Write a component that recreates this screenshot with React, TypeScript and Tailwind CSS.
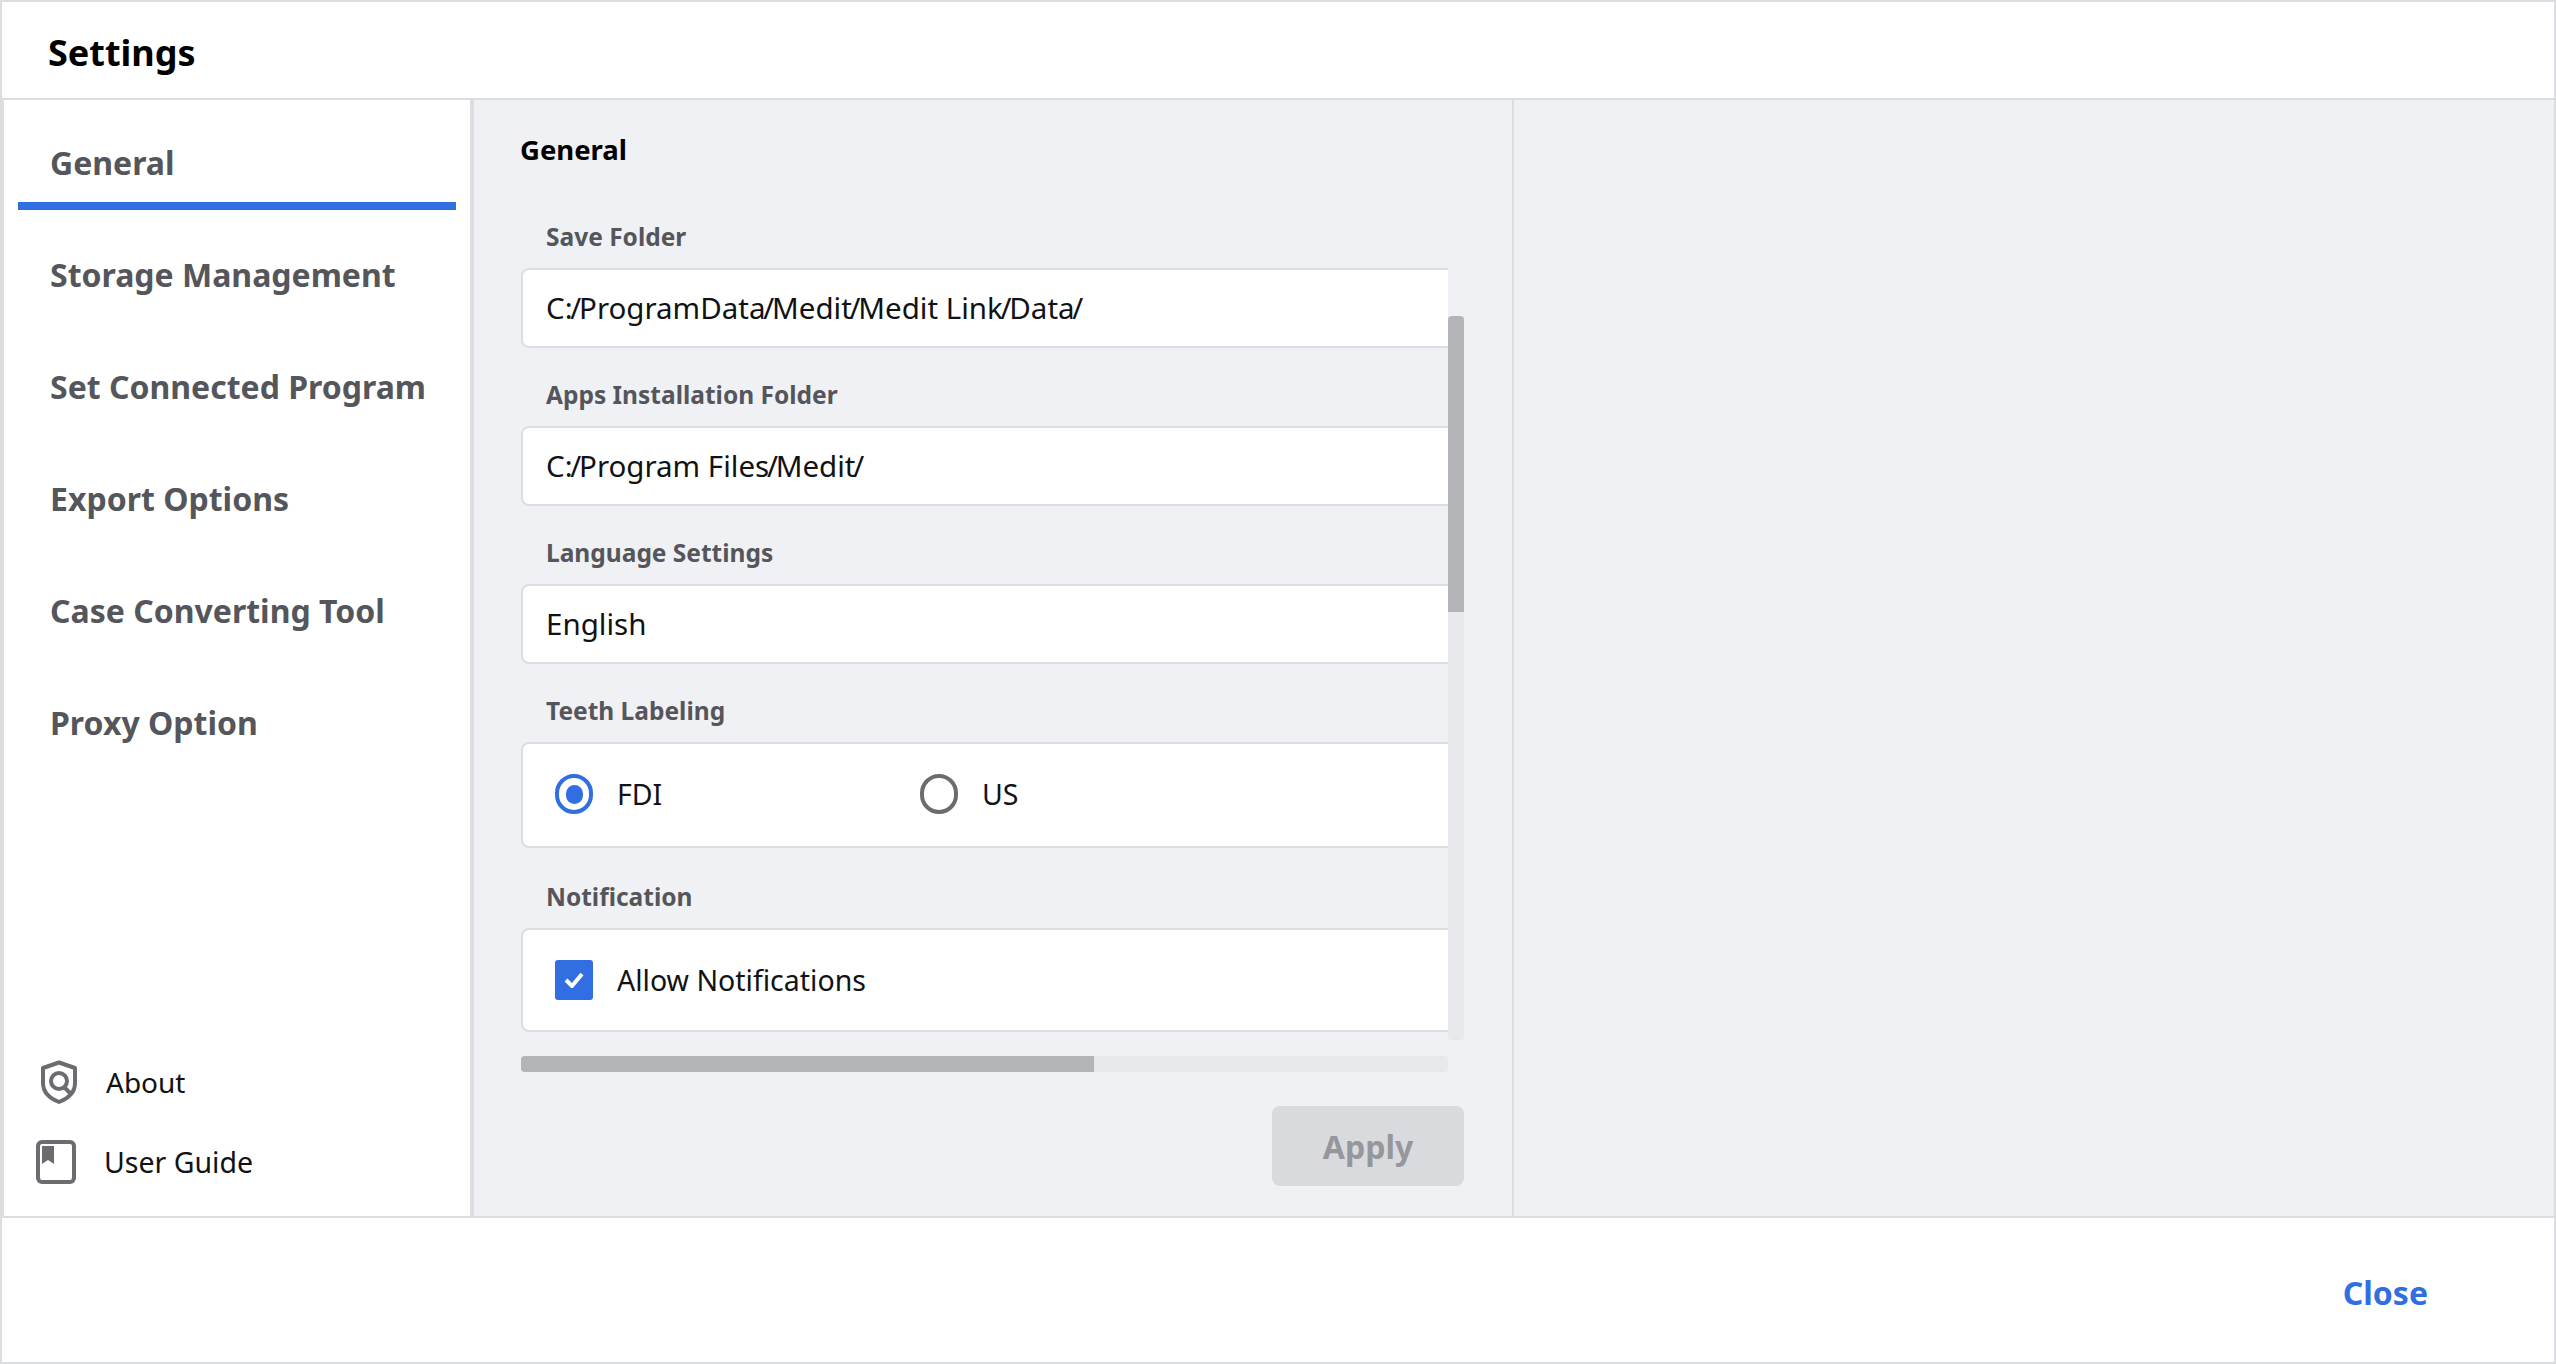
import { ReactNode } from 'react';

const navItems = [
  'General',
  'Storage Management',
  'Set Connected Program',
  'Export Options',
  'Case Converting Tool',
  'Proxy Option',
];

function ShieldIcon() {
  return (
    <svg width="38" height="44" viewBox="0 0 38 44" fill="none" stroke="#6b6c70">
      <path d="M19 2.500 35 8v15c0 9-7 15.500-16 19C10 38.500 3 32 3 23V8z" strokeWidth="4" strokeLinejoin="round" />
      <circle cx="19" cy="21" r="8" strokeWidth="4" />
      <path d="m24 27 7 7" strokeWidth="4" />
    </svg>
  );
}

function BookIcon() {
  return (
    <svg width="40" height="44" viewBox="0 0 40 44" fill="none">
      <rect x="2" y="2" width="36" height="40" rx="4" stroke="#6b6c70" strokeWidth="4" />
      <path d="M6 6h12v18l-6-4-6 4z" fill="#6b6c70" />
    </svg>
  );
}

function Field({ label, children, className }: { label: string; children: ReactNode; className: string }) {
  return (
    <div className={className}>
      <div className="h-[30px] pl-[25px] text-[24.500px] leading-[30px] font-bold text-[#55565b]">{label}</div>
      {children}
    </div>
  );
}

function TextBox({ value }: { value: string }) {
  // slashes sit tighter in the original font
  const parts = value.split('/');
  return (
    <div className="mt-[16px] flex h-[80px] w-[960px] items-center rounded-[8px] border-2 border-[#dcdde0] bg-white pl-[23px] text-[29.500px] text-[#111214]">
      <span className="whitespace-pre">
        {parts.map((part, index) => (
          <span key={index}>
            {part}
            {index < parts.length - 1 && <span className="mx-[-2.250px]">/</span>}
          </span>
        ))}
      </span>
    </div>
  );
}

export default function App() {
  return (
    <div className="flex h-[1364px] w-full flex-col border-2 border-[#dcdde0] bg-white font-['Noto_Sans',sans-serif]">
      <header className="flex h-[96px] shrink-0 items-center pt-[5px] pl-[46px] text-[36px] font-bold text-black">Settings</header>

      <div className="flex min-h-0 flex-1 border-y-2 border-[#dcdde0]">
        {/* Sidebar */}
        <aside className="flex w-[472px] shrink-0 flex-col border-r-4 border-l-2 border-[#dcdde0] bg-white pl-[14px]">
          <nav className="flex flex-col">
            {navItems.map((item, index) => (
              <a
                key={index}
                className={
                  index === 0
                    ? 'mb-[2px] h-[110px] w-[438px] border-b-8 border-[#306ee2] pt-[41px] pl-[32px] text-[32px] leading-[44px] font-bold text-[#55565b]'
                    : 'h-[112px] w-[438px] pt-[41px] pl-[32px] text-[32px] leading-[44px] font-bold text-[#55565b]'
                }
              >
                {item}
              </a>
            ))}
          </nav>
          <div className="mt-auto flex flex-col gap-[36px] pb-[32px] pl-[18px]">
            <div className="flex h-[44px] items-center gap-[28px] pl-[4px] text-[28px] text-[#111214]">
              <ShieldIcon />
              About
            </div>
            <div className="flex h-[44px] items-center gap-[28px] text-[28.500px] text-[#111214]">
              <BookIcon />
              User Guide
            </div>
          </div>
        </aside>

        {/* General panel */}
        <main className="flex w-[1040px] shrink-0 flex-col border-r-2 border-[#dcdde0] bg-[#f0f1f5] pl-[46px]">
          <h2 className="mt-[30px] h-[40px] text-[27.500px] leading-[40px] font-bold text-black">General</h2>
          <div className="mt-[48px] ml-px flex">
            <div className="h-[822px] w-[927px] overflow-hidden pt-[4px]">
              <Field label="Save Folder" className="mb-[32px]">
                <TextBox value="C:/ProgramData/Medit/Medit Link/Data/" />
              </Field>
              <Field label="Apps Installation Folder" className="mb-[32px]">
                <TextBox value="C:/Program Files/Medit/" />
              </Field>
              <Field label="Language Settings" className="mb-[32px]">
                <TextBox value="English" />
              </Field>
              <Field label="Teeth Labeling" className="mb-[34px]">
                <div className="mt-[16px] flex h-[106px] w-[960px] items-center rounded-[8px] border-2 border-[#dcdde0] bg-white pb-[2px] pl-[32px] text-[28.500px] text-[#111214]">
                  <div className="flex w-[365px] items-center gap-[24px]">
                    <span className="flex h-[40px] w-[38px] items-center justify-center rounded-full border-4 border-[#306ee2]">
                      <span className="h-[19px] w-[17px] rounded-full bg-[#306ee2]" />
                    </span>
                    FDI
                  </div>
                  <div className="flex items-center gap-[24px]">
                    <span className="h-[40px] w-[38px] rounded-full border-4 border-[#6b6c70]" />
                    US
                  </div>
                </div>
              </Field>
              <Field label="Notification" className="">
                <div className="mt-[16px] flex h-[104px] w-[960px] items-center gap-[24px] rounded-[8px] border-2 border-[#dcdde0] bg-white pl-[32px] text-[28.500px] text-[#111214]">
                  <span className="flex h-[40px] w-[38px] items-center justify-center rounded-[3px] bg-[#306ee2]">
                    <svg width="20" height="16" viewBox="0 0 20 16" fill="none" stroke="white" strokeWidth="4">
                      <path d="m2 8 6 6L18 2" />
                    </svg>
                  </span>
                  Allow Notifications
                </div>
              </Field>
            </div>
            <div className="pt-[98px]">
              <div className="h-[724px] w-[16px] rounded-b-[4px] bg-[#e8e9ed]">
                <div className="h-[296px] w-[16px] rounded-t-[4px] bg-[#b3b4b8]" />
              </div>
            </div>
          </div>
          <div className="mt-[16px] ml-px h-[16px] w-[927px] rounded-[4px] bg-[#e8e9ed]">
            <div className="h-[16px] w-[573px] rounded-l-[4px] bg-[#b3b4b8]" />
          </div>
          <button className="mt-[34px] ml-[752px] h-[80px] w-[192px] rounded-[8px] bg-[#d9dade] pt-[2px] text-[32px] font-bold text-[#96979b]">
            Apply
          </button>
        </main>

        <div className="flex-1 bg-[#f0f1f5]" />
      </div>

      <footer className="flex h-[144px] shrink-0 items-center justify-end pt-[6px] pr-[126px] text-[32px] font-bold text-[#306ee2]">
        Close
      </footer>
    </div>
  );
}
